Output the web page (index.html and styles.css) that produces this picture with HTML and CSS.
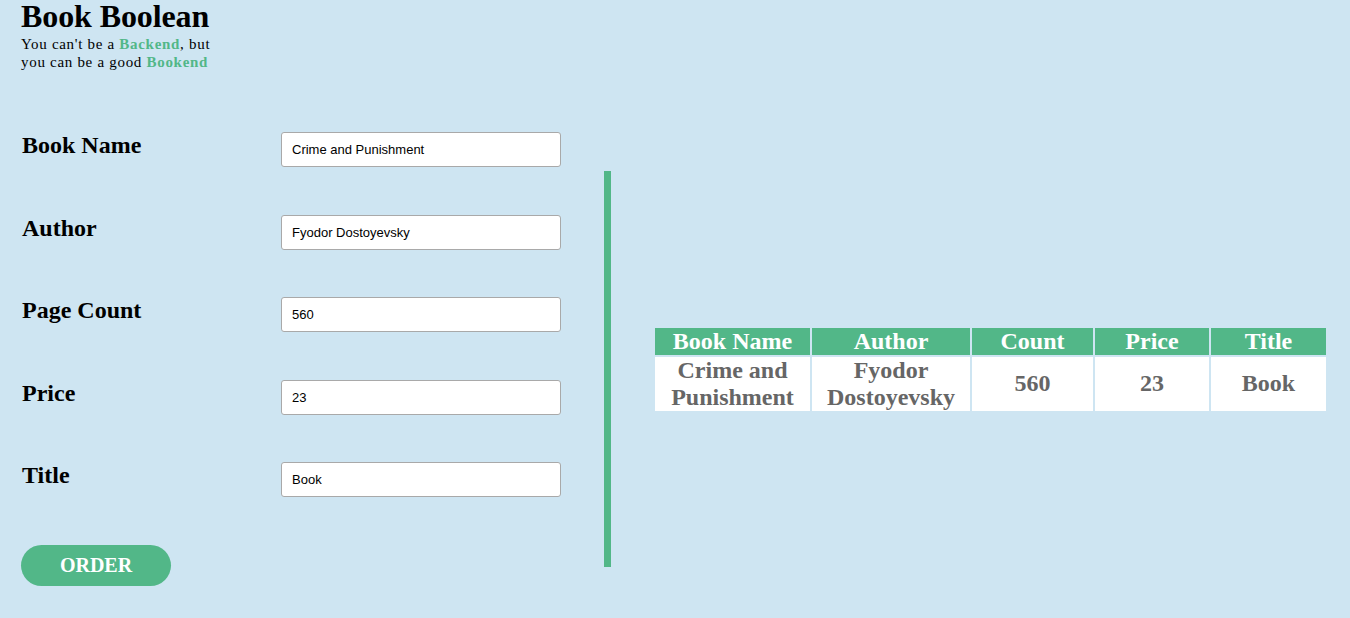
FILE: index.html
```html
<!DOCTYPE html>
<html lang="en">
<head>
<meta charset="utf-8">
<title>Book Boolean</title>
<link rel="stylesheet" href="styles.css">
</head>
<body>
<header class="site-header">
  <h1 class="brand">Book Boolean</h1>
  <p class="tagline">You can't be a <b class="accent">Backend</b>, but<br>you can be a good <b class="accent">Bookend</b></p>
</header>
<main class="layout">
  <form class="book-form">
    <div class="field">
      <label class="field-label" for="name">Book Name</label>
      <input class="field-input" id="name" type="text" value="Crime and Punishment">
    </div>
    <div class="field">
      <label class="field-label" for="author">Author</label>
      <input class="field-input" id="author" type="text" value="Fyodor Dostoyevsky">
    </div>
    <div class="field">
      <label class="field-label" for="count">Page Count</label>
      <input class="field-input" id="count" type="text" value="560">
    </div>
    <div class="field">
      <label class="field-label" for="price">Price</label>
      <input class="field-input" id="price" type="text" value="23">
    </div>
    <div class="field">
      <label class="field-label" for="title">Title</label>
      <input class="field-input" id="title" type="text" value="Book">
    </div>
    <button class="order-btn" type="button">ORDER</button>
  </form>
  <div class="divider"></div>
  <section class="result">
    <table class="book-table">
      <thead>
        <tr>
          <th class="c-name">Book Name</th>
          <th class="c-author">Author</th>
          <th class="c-count">Count</th>
          <th class="c-price">Price</th>
          <th class="c-title">Title</th>
        </tr>
      </thead>
      <tbody>
        <tr>
          <td>Crime and Punishment</td>
          <td>Fyodor Dostoyevsky</td>
          <td>560</td>
          <td>23</td>
          <td>Book</td>
        </tr>
      </tbody>
    </table>
  </section>
</main>
</body>
</html>
```
FILE: styles.css
```css
html, body {
  margin: 0;
  padding: 0;
}
body {
  background: #cee5f2;
  font-family: "Liberation Serif", "Times New Roman", serif;
  color: #000;
  min-height: 618px;
  overflow: hidden;
}
.site-header {
  padding: 0 21px;
}
.brand {
  margin: 0;
  font-size: 32px;
  line-height: 32px;
  font-weight: bold;
  letter-spacing: -0.1px;
}
.tagline {
  margin: 3px 0 0;
  font-size: 15px;
  line-height: 18px;
  letter-spacing: 0.7px;
}
.accent {
  color: #52b788;
}
.layout {
  display: flex;
  align-items: flex-start;
  margin-top: 61px;
}
.book-form {
  padding-left: 21px;
  width: 540px;
  display: flex;
  flex-direction: column;
  gap: 48.5px;
}
.field {
  display: flex;
  align-items: flex-start;
  height: 34px;
}
.field-label {
  width: 260px;
  font-size: 24px;
  font-weight: bold;
  line-height: 26px;
  padding-left: 1px;
}
.field-input {
  width: 280px;
  height: 35px;
  box-sizing: border-box;
  border: 1px solid #a9a9a9;
  border-radius: 3px;
  padding: 0 10px;
  font-family: "Liberation Sans", Arial, sans-serif;
  font-size: 13px;
  color: #000;
  background: #fff;
  margin-left: -1px;
}
.order-btn {
  width: 150px;
  height: 41px;
  border: none;
  border-radius: 21px;
  background: #52b788;
  color: #fff;
  font-family: "Liberation Serif", "Times New Roman", serif;
  font-size: 20px;
  font-weight: bold;
  line-height: 41px;
  padding: 0;
  margin-left: 0;
}
.divider {
  width: 7px;
  height: 396px;
  background: #52b788;
  margin-top: 39px;
  margin-left: 43px;
  flex-shrink: 0;
}
.result {
  margin-top: 39px;
  height: 396px;
  padding-left: 42px;
  display: flex;
  align-items: center;
}
.book-table {
  table-layout: fixed;
  width: 675px;
  border-collapse: separate;
  border-spacing: 2px;
  font-size: 24px;
  font-weight: bold;
  text-align: center;
}
.book-table th,
.book-table td {
  padding: 0;
  line-height: 27px;
}
.book-table th {
  background: #52b788;
  color: #fff;
}
.book-table td {
  background: #fff;
  color: #666;
}
.c-name { width: 155px; }
.c-author { width: 158px; }
.c-count { width: 121px; }
.c-price { width: 114px; }
.c-title { width: 115px; }
```
